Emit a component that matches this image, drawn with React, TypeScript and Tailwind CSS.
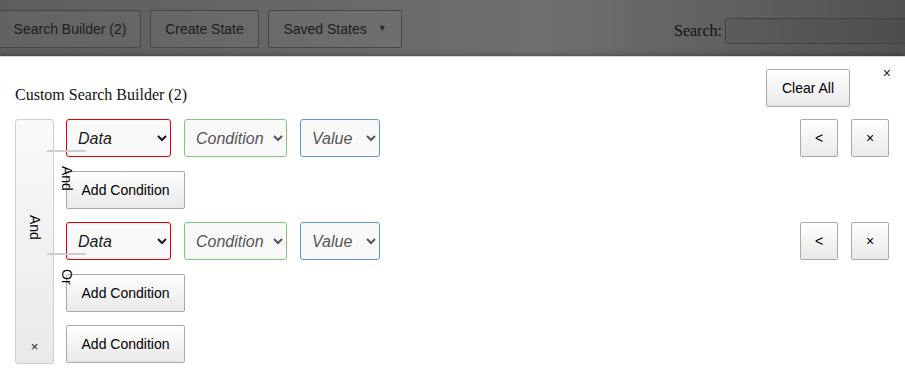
import React from 'react';

const btn =
  "h-[38px] border border-[#a9a9a9] rounded-[2px] bg-[linear-gradient(180deg,#ffffff_0%,#e9e9e9_100%)] text-[14px] text-black flex items-center justify-center shrink-0";

const TopButton: React.FC<{ className?: string; children: React.ReactNode }> = ({ className = '', children }) => (
  <div
    className={`h-[38px] border border-[#474747] rounded-[2px] bg-white/[0.03] text-[14px] text-[#1c1c1c] flex items-center justify-center shrink-0 ${className}`}
  >
    {children}
  </div>
);

const Sel: React.FC<{ label: string; border: string; width: string; tone: string }> = ({ label, border, width, tone }) => (
  <select
    defaultValue={label}
    className={`h-[38px] ${width} ${border} ${tone} border rounded-[3px] bg-[#f9f9f9] italic text-[16px] pl-[7px] pr-[4px] shrink-0 font-['Liberation_Sans',Arial,sans-serif]`}
  >
    <option>{label}</option>
  </select>
);

const CriteriaRow: React.FC = () => (
  <div className="flex items-center gap-[13px]">
    <Sel label="Data" border="border-[#e00000]" width="w-[105px]" tone="text-[#1a1a1a]" />
    <Sel label="Condition" border="border-[#7ccb7c]" width="w-[103px]" tone="text-[#555]" />
    <Sel label="Value" border="border-[#5b9bd5]" width="w-[80px]" tone="text-[#555]" />
    <div className="flex-1" />
    <button className={`${btn} w-[38px] text-[13px]`}>&lt;</button>
    <button className={`${btn} w-[38px] text-[13px]`}>×</button>
  </div>
);

const SubGroup: React.FC<{ logic: string }> = ({ logic }) => (
  <div className="relative flex flex-col gap-[14px]">
    <CriteriaRow />
    <button className={`${btn} w-[119px]`}>Add Condition</button>
    {/* nested logic connector */}
    <div className="absolute left-[-19px] top-[31px] w-[39px] h-[2px] bg-[#cfcfcf]" />
    <div className="absolute left-[-7px] top-[47px] [writing-mode:vertical-rl] text-[14px] leading-[16px] text-black">
      {logic}
    </div>
  </div>
);

export default function App() {
  return (
    <div className="w-[905px] h-[389px] overflow-hidden bg-white font-['Liberation_Sans',Arial,sans-serif]">
      {/* dimmed page header */}
      <div className="h-[56px] flex items-start overflow-hidden bg-[linear-gradient(90deg,#5d5d5d_0%,#666_30%,#6f6f6f_60%,#5a5a5a_88%,#515151_100%)]">
        <div className="flex gap-[9px] pt-[10px]">
          <TopButton className="w-[142px] -ml-[1px]">Search Builder (2)</TopButton>
          <TopButton className="w-[109px]">Create State</TopButton>
          <TopButton className="w-[134px] gap-[11px]">
            <span>Saved States</span>
            <span className="text-[9px] text-[#2a2a2a]">▼</span>
          </TopButton>
        </div>
        <div className="flex items-center gap-[3px] pt-[18px] ml-[272px] shrink-0">
          <span className="font-['Liberation_Serif',serif] text-[16px] text-[#111]">Search:</span>
          <input className="w-[200px] h-[26px] border border-[#424242] rounded-[3px] bg-black/[0.04] shrink-0" />
        </div>
      </div>

      {/* modal */}
      <div className="relative h-[333px] bg-white border-t border-[#d8d8d8] pl-[15px] pr-[16px] shadow-[0_0_6px_rgba(0,0,0,0.4)]">
        <div className="absolute right-[14px] top-[6px] text-[14px] text-[#222]">×</div>
        <div className="flex items-start">
          <div className="flex-1 pt-[26px] font-['Liberation_Serif',serif] text-[16px] text-[#111]">
            Custom Search Builder (2)
          </div>
          <button className={`${btn} w-[84px] mt-[12px] mr-[39px]`}>Clear All</button>
        </div>

        <div className="flex mt-[12px] gap-[12px]">
          <div className="w-[39px] h-[245px] shrink-0 border border-[#cfcfcf] rounded-[3px] bg-[linear-gradient(180deg,#fafafa_0%,#e9e9e9_100%)] flex flex-col items-center pt-[95px] pb-[7px]">
            <div className="[writing-mode:vertical-rl] text-[14px] leading-[16px] text-black">And</div>
            <div className="flex-1" />
            <div className="text-[13px] text-[#222]">×</div>
          </div>
          <div className="flex-1 flex flex-col gap-[13px]">
            <SubGroup logic="And" />
            <SubGroup logic="Or" />
            <button className={`${btn} w-[119px]`}>Add Condition</button>
          </div>
        </div>
      </div>
    </div>
  );
}
